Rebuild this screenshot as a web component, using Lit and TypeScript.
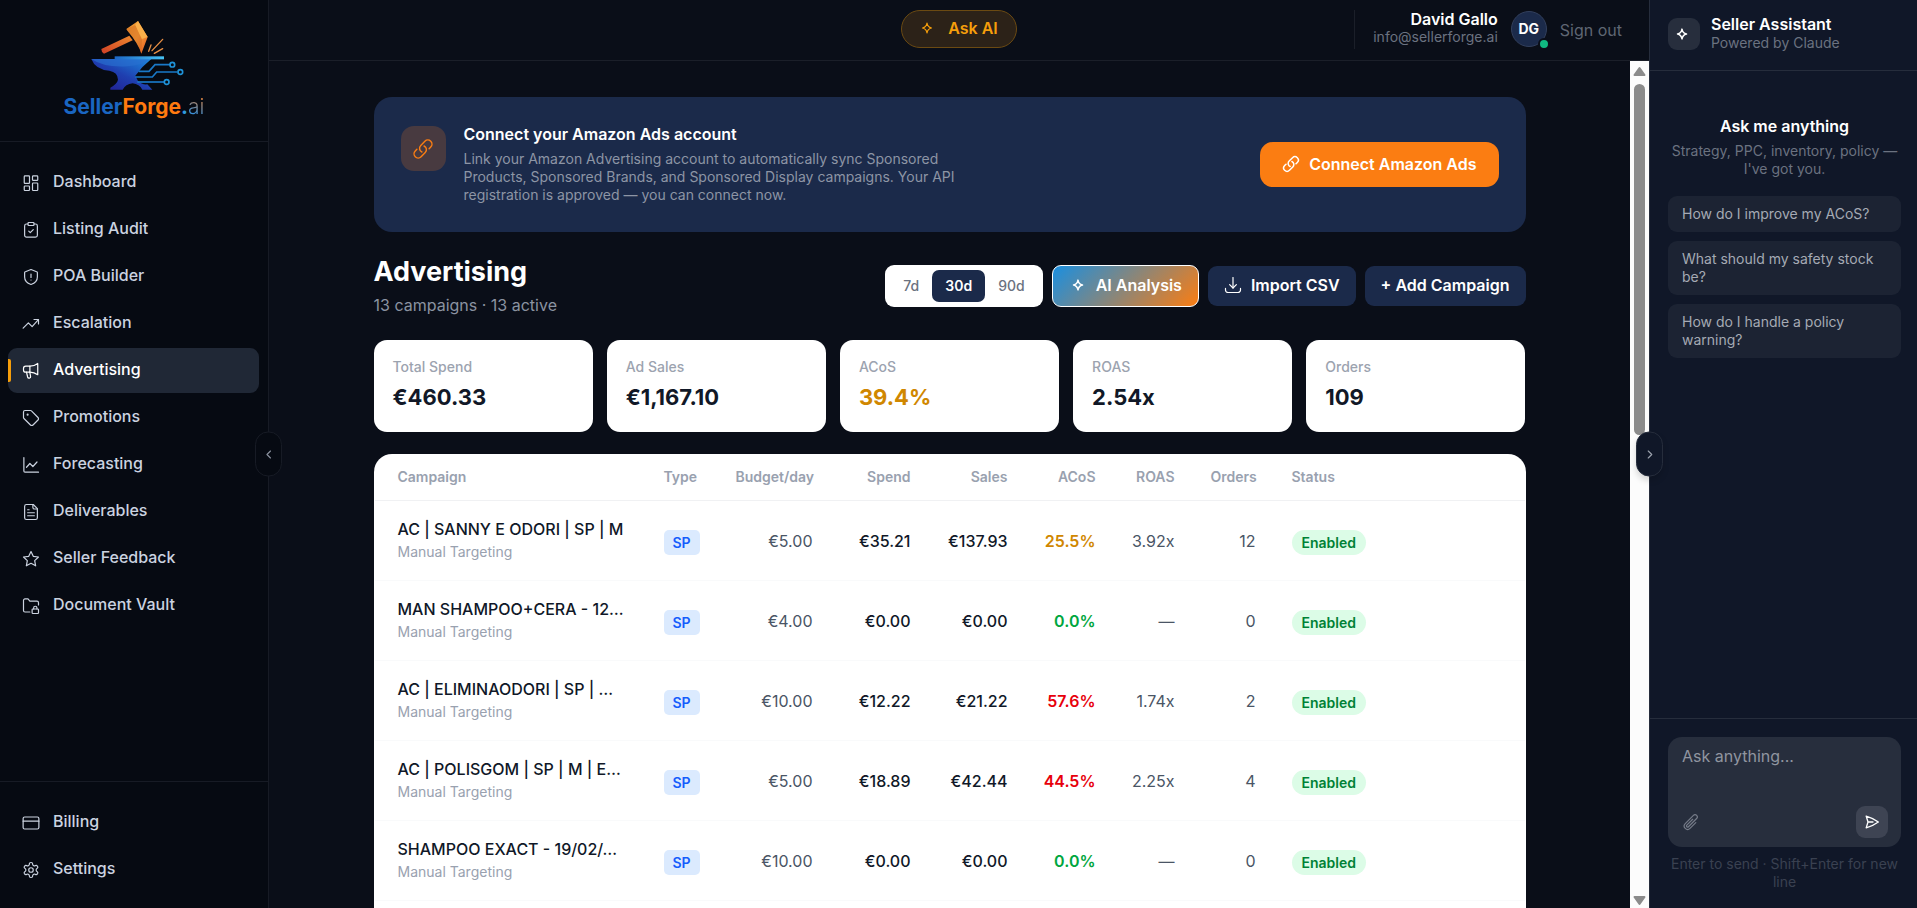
import { LitElement, html, css, svg } from "lit";
import { customElement, property, state } from "lit/decorators.js";
import { classMap } from "lit/directives/class-map.js";

const ICONS: Record<string, unknown> = {
  dashboard: svg`<rect x="3" y="2.500" width="7" height="10" rx="1"/><rect x="14" y="2.500" width="7" height="6" rx="1"/><rect x="14" y="12" width="7" height="10" rx="1"/><rect x="3" y="16" width="7" height="6" rx="1"/>`,
  clipboard: svg`<rect x="8" y="2" width="8" height="4" rx="1"/><path d="M16 4h2a2.500 2.500 0 0 1 2.500 2.500V19a2.500 2.500 0 0 1-2.500 2.500H6A2.500 2.500 0 0 1 3.500 19V6.500A2.500 2.500 0 0 1 6 4h2"/><path d="m9 13.500 2 2 4-4"/>`,
  shield: svg`<path d="M12 2 4.500 5a1 1 0 0 0-1 1v6c0 5 4 8.500 8.500 10 4.500-1.500 8.500-5 8.500-10V6a1 1 0 0 0-1-1L12 2z"/><path d="M12 8v4.500"/><path d="M12 16h.01"/>`,
  trend: svg`<path d="m1.500 17.500 7-7 5 5 8-9"/><path d="M16 6h6v6"/>`,
  megaphone: svg`<path d="M10.500 5.500H5a3 3 0 0 0-3 3v2a3 3 0 0 0 3 3h5.500z"/><path d="M10.500 5.500c4 0 7.500-1.200 10.500-3.500v15c-3-2.300-6.500-3.500-10.500-3.500"/><path d="M6 13.500l1.500 6.500a2 2 0 0 0 3.900-1l-1-5.500"/>`,
  tag: svg`<path d="M12.600 2.600A2 2 0 0 0 11.200 2H4a2 2 0 0 0-2 2v7.200a2 2 0 0 0 .6 1.400l8.700 8.700a2.400 2.400 0 0 0 3.400 0l6.600-6.600a2.400 2.400 0 0 0 0-3.400z"/><circle cx="7.500" cy="7.500" r=".6"/>`,
  chart: svg`<path d="M2.500 2v18a1.500 1.500 0 0 0 1.500 1.500h18"/><path d="m6 15 4.500-5 4 4L20 8"/>`,
  file: svg`<path d="M15 2H6a2.500 2.500 0 0 0-2.500 2.500v15A2.500 2.500 0 0 0 6 22h12a2.500 2.500 0 0 0 2.500-2.500V7.500z"/><path d="M14.500 2v4a2 2 0 0 0 2 2h4"/><path d="M7.500 9h2"/><path d="M7.500 13h9"/><path d="M7.500 17h9"/>`,
  star: svg`<path d="m12 2 3 6.400 7 .9-5.100 4.800 1.300 7-6.200-3.400-6.200 3.400 1.300-7L2 9.300l7-.9z"/>`,
  folder: svg`<path d="M10.500 20H4a2 2 0 0 1-2-2V4.500a2 2 0 0 1 2-2h4l2.500 3H20a2 2 0 0 1 2 2v3"/><rect x="13.500" y="16" width="8.500" height="6" rx="1"/><path d="M15.500 16v-1.500a2.200 2.200 0 0 1 4.400 0V16"/>`,
  card: svg`<rect x="1.500" y="4" width="21" height="16" rx="2"/><path d="M1.500 9.500h21"/>`,
  gear: svg`<path d="M12.200 2h-.4a2 2 0 0 0-2 2v.2a2 2 0 0 1-1 1.700l-.5.300a2 2 0 0 1-2 0l-.1-.1a2 2 0 0 0-2.700.7l-.3.400a2 2 0 0 0 .8 2.700l.1.100a2 2 0 0 1 1 1.700v.5a2 2 0 0 1-1 1.800l-.1.100a2 2 0 0 0-.8 2.700l.3.400a2 2 0 0 0 2.700.7l.1-.1a2 2 0 0 1 2 0l.5.300a2 2 0 0 1 1 1.700v.2a2 2 0 0 0 2 2h.4a2 2 0 0 0 2-2v-.2a2 2 0 0 1 1-1.700l.5-.3a2 2 0 0 1 2 0l.1.100a2 2 0 0 0 2.700-.7l.3-.4a2 2 0 0 0-.8-2.700l-.1-.1a2 2 0 0 1-1-1.800v-.5a2 2 0 0 1 1-1.700l.1-.1a2 2 0 0 0 .8-2.700l-.3-.4a2 2 0 0 0-2.700-.7l-.1.100a2 2 0 0 1-2 0l-.5-.3a2 2 0 0 1-1-1.700V4a2 2 0 0 0-2-2z"/><circle cx="12" cy="12" r="3"/>`,
  sparkle: svg`<path d="M12 5.500c.7 4 2.400 5.800 6 6.500-3.600.7-5.300 2.500-6 6.500-.7-4-2.400-5.800-6-6.500 3.600-.7 5.300-2.500 6-6.500z"/>`,
  link: svg`<path d="M13.190 8.688a4.500 4.500 0 0 1 1.242 7.244l-4.500 4.500a4.500 4.500 0 0 1-6.364-6.364l1.757-1.757m13.350-.622 1.757-1.757a4.500 4.500 0 0 0-6.364-6.364l-4.500 4.500a4.500 4.500 0 0 0 1.242 7.244"/>`,
  download: svg`<path d="M12 2v14"/><path d="m7.500 11.500 4.500 4.500 4.500-4.500"/><path d="M2 16.500v2A3.500 3.500 0 0 0 5.500 22h13a3.500 3.500 0 0 0 3.500-3.500v-2"/>`,
  left: svg`<path d="m14.500 6-6 6 6 6"/>`,
  right: svg`<path d="m9 6 6 6-6 6"/>`,
  clip: svg`<path d="m18.375 12.739-7.693 7.693a4.500 4.500 0 0 1-6.364-6.364l10.940-10.940A3 3 0 1 1 19.500 7.372L8.552 18.320m5.698-9.941-7.810 7.810a1.500 1.500 0 0 0 2.112 2.130"/>`,
  send: svg`<path d="M6 12 3.269 3.125A59.769 59.769 0 0 1 21.485 12 59.768 59.768 0 0 1 3.270 20.875L5.999 12Zm0 0h7.500"/>`,
};

@customElement("sf-icon")
class SfIcon extends LitElement {
  @property() name = "";
  static styles = css`
    :host { display: inline-flex; flex: none; width: 18px; height: 18px; }
    svg { width: 100%; height: 100%; fill: none; stroke: currentColor; stroke-width: var(--stroke, 1.6); stroke-linecap: round; stroke-linejoin: round; }
  `;
  render() {
    return html`<svg viewBox="0 0 24 24" aria-hidden="true">${ICONS[this.name]}</svg>`;
  }
}

@customElement("sf-logo")
class SfLogo extends LitElement {
  static styles = css`
    :host { display: flex; flex-direction: column; align-items: center; }
    svg { width: 96px; height: 72px; }
    .word { margin-top: 3px; font: 700 21px/26px "Inter", sans-serif; color: #1a66c2; }
    .forge { color: #ff7a0f; }
    .dot { color: #2f9be0; }
    .ai { font-weight: 300; background: linear-gradient(20deg, #3a8fd6 25%, #d97f3c 85%); -webkit-background-clip: text; background-clip: text; color: transparent; }
  `;
  render() {
    return html`
      <svg viewBox="256 54 288 216" overflow="visible" aria-hidden="true">
        <defs>
          <linearGradient id="hd" x1="0" y1="0" x2="1" y2="1"><stop offset="0" stop-color="#e8902c"/><stop offset="0.5" stop-color="#f7a03a"/><stop offset="1" stop-color="#e2551f"/></linearGradient>
          <linearGradient id="hn" x1="0" y1="1" x2="1" y2="0"><stop offset="0" stop-color="#cf3f26"/><stop offset="1" stop-color="#ee8a2e"/></linearGradient>
          <linearGradient id="bd" x1="0" y1="1" x2="1" y2="0"><stop offset="0" stop-color="#22188a"/><stop offset="0.5" stop-color="#1f3fb0"/><stop offset="1" stop-color="#1c8be0"/></linearGradient>
          <linearGradient id="pl" x1="0" y1="0" x2="1" y2="0"><stop offset="0" stop-color="#1c66c4"/><stop offset="1" stop-color="#46c3f5"/></linearGradient>
        </defs>
        <path d="M302 144 386 104 396 118 310 158Q302 154 302 144Z" fill="url(#hn)"/>
        <path d="M378 83 412 60 441 108 422 158Q414 128 378 86Z" fill="url(#hd)"/>
        <path d="M378 83 404 72 424 116 422 158Q414 128 378 86Z" fill="#c9601f" opacity=".4"/>
        <path d="M412 60 441 108 424 114 404 72Z" fill="#fbb04a"/>
        <g stroke="#e89045" stroke-width="4" stroke-linecap="round"><path d="M444 151 451 132"/><path d="M454 149 486 115"/><path d="M461 157 486 143"/></g>
        <path d="M272 174H452Q424 196 404 224L412 240Q424 252 440 250L455 266H425Q416 249 396 247 374 250 366 266H329V260Q350 248 352 236 352 214 326 209 284 206 272 174Z" fill="url(#bd)"/>
        <path d="M272 174H448Q424 194 380 196 310 200 272 174Z" fill="#2a6fd0" opacity=".65"/>
        <rect x="342" y="166" width="148" height="9" fill="url(#pl)"/>
        <g fill="none" stroke="#1979c8" stroke-width="5"><path d="M414 211H445L463 191H508"/><path d="M404 228H455L468 213H530"/><path d="M410 243H490"/></g>
        <g fill="#060a12" stroke="#1f93d8" stroke-width="5"><circle cx="515" cy="191" r="7"/><circle cx="539" cy="213" r="7"/><circle cx="498" cy="243" r="7"/></g>
      </svg>
      <div class="word">Seller<span class="forge">Forge</span><span class="dot">.</span><span class="ai">ai</span></div>
    `;
  }
}

const NAV = [
  ["dashboard", "Dashboard"], ["clipboard", "Listing Audit"], ["shield", "POA Builder"],
  ["trend", "Escalation"], ["megaphone", "Advertising"], ["tag", "Promotions"],
  ["chart", "Forecasting"], ["file", "Deliverables"], ["star", "Seller Feedback"], ["folder", "Document Vault"],
];
const FOOT = [["card", "Billing"], ["gear", "Settings"]];

@customElement("sf-sidebar")
class SfSidebar extends LitElement {
  static styles = css`
    :host { position: relative; z-index: 3; display: flex; flex-direction: column; flex: none; width: 268px; background: #060a12; border-right: 1px solid #171b25; }
    .brand { padding: 19px 0 21px; border-bottom: 1px solid #171b25; }
    nav { display: flex; flex-direction: column; gap: 2px; padding: 18px 9px 16px 8px; }
    .main { flex: 1; }
    .foot { border-top: 1px solid #171b25; }
    a { position: relative; display: flex; align-items: center; gap: 13px; height: 45px; padding: 0 14px; border-radius: 9px; color: #cbd3e0; font-size: 16px; font-weight: 500; text-decoration: none; }
    a span { margin-bottom: 3px; }
    a.on { background: #202836; color: #fff; }
    a.on::before { content: ""; position: absolute; left: 0; top: 11px; width: 3px; height: 23px; border-radius: 0 2px 2px 0; background: #f59e0b; }
    .fold { position: absolute; right: -14px; top: 50%; transform: translateY(-50%); display: grid; place-items: center; width: 27px; height: 45px; padding: 0; border: 1px solid #171b25; border-radius: 13px; background: #060a12; color: #8a919e; --stroke: 2; }
    .fold sf-icon { width: 14px; height: 14px; }
  `;
  private item([icon, label]: string[]) {
    const on = label === "Advertising";
    return html`<a href="#" class=${classMap({ on })}><sf-icon name=${icon}></sf-icon><span>${label}</span></a>`;
  }
  render() {
    return html`
      <div class="brand"><sf-logo></sf-logo></div>
      <nav class="main">${NAV.map((n) => this.item(n))}</nav>
      <nav class="foot">${FOOT.map((n) => this.item(n))}</nav>
      <button class="fold" aria-label="Collapse menu"><sf-icon name="left"></sf-icon></button>
    `;
  }
}

@customElement("sf-assistant")
class SfAssistant extends LitElement {
  static styles = css`
    :host { position: relative; z-index: 3; display: flex; flex-direction: column; flex: none; width: 267px; background: #101728; border-left: 1px solid #262d3c; }
    header { display: flex; align-items: center; gap: 11px; height: 71px; box-sizing: border-box; padding: 0 16px 2px 18px; border-bottom: 1px solid #262d3c; }
    .title { padding-bottom: 3px; }
    .mark { display: grid; place-items: center; width: 32px; height: 32px; border-radius: 9px; background: #272e3d; color: #fff; --stroke: 2; }
    .mark sf-icon { margin-right: 4px; }
    h2 { margin: 0; font-size: 16px; line-height: 20px; font-weight: 600; color: #fff; }
    p { margin: 0; font-size: 14px; line-height: 18px; color: #6b7280; }
    .body { flex: 1; display: flex; flex-direction: column; gap: 9px; padding: 44px 16px 18px 18px; }
    .intro { text-align: center; margin-bottom: 9px; }
    .intro h2 { line-height: 22px; margin-bottom: 5px; }
    .chip { display: block; width: 100%; padding: 9px 14px; border: 0; border-radius: 9px; background: #1c2333; color: #a5aab4; font: 400 14px/18px "Inter", sans-serif; text-align: left; }
    footer { display: flex; flex-direction: column; padding: 18px 16px 17px 18px; border-top: 1px solid #262d3c; text-align: center; }
    .box { display: flex; flex-direction: column; box-sizing: border-box; height: 110px; margin-bottom: 8px; padding: 8px 13px 9px 14px; border-radius: 14px; background: #272e3d; }
    textarea { flex: 1; min-height: 0; border: 0; padding: 0; background: none; outline: none; resize: none; color: #fff; font: 400 16px/22px "Inter", sans-serif; }
    textarea::placeholder { color: #9095a0; opacity: 1; }
    .tools { display: flex; align-items: center; justify-content: space-between; }
    .tools button { display: grid; place-items: center; height: 32px; padding: 0; border: 0; background: none; color: #767c89; }
    .tools .send { width: 32px; border-radius: 9px; background: #3e4453; color: #fff; --stroke: 2; }
    .tools sf-icon { width: 18px; height: 18px; }
    .tools .send sf-icon { width: 16px; height: 16px; }
    .hint { color: #3a4151; }
    .fold { position: absolute; left: -14px; top: 50%; transform: translateY(-50%); display: grid; place-items: center; width: 27px; height: 45px; padding: 0; border: 1px solid #262d3c; border-radius: 13px; background: #101728; color: #9aa0ac; --stroke: 2; box-shadow: 0 4px 6px rgba(0, 0, 0, 0.15); }
    .fold sf-icon { width: 14px; height: 14px; }
  `;
  render() {
    return html`
      <button class="fold" aria-label="Collapse assistant"><sf-icon name="right"></sf-icon></button>
      <header>
        <div class="mark"><sf-icon name="sparkle"></sf-icon></div>
        <div class="title"><h2>Seller Assistant</h2><p>Powered by Claude</p></div>
      </header>
      <div class="body">
        <div class="intro"><h2>Ask me anything</h2><p>Strategy, PPC, inventory, policy — I've got you.</p></div>
        ${["How do I improve my ACoS?", "What should my safety stock be?", "How do I handle a policy warning?"].map(
          (q) => html`<button class="chip">${q}</button>`)}
      </div>
      <footer>
        <div class="box">
          <textarea aria-label="Message" placeholder="Ask anything..."></textarea>
          <div class="tools">
            <button aria-label="Attach file"><sf-icon name="clip"></sf-icon></button>
            <button class="send" aria-label="Send"><sf-icon name="send"></sf-icon></button>
          </div>
        </div>
        <p class="hint">Enter to send · Shift+Enter for new line</p>
      </footer>
    `;
  }
}

const STATS = [["Total Spend", "€460.33"], ["Ad Sales", "€1,167.10"], ["ACoS", "39.4%"], ["ROAS", "2.54x"], ["Orders", "109"]];
const ROWS = [
  ["AC | SANNY E ODORI | SP | M", "€5.00", "€35.21", "€137.93", "25.5%", "3.92x", "12", "warn"],
  ["MAN SHAMPOO+CERA - 12…", "€4.00", "€0.00", "€0.00", "0.0%", "—", "0", "good"],
  ["AC | ELIMINAODORI | SP | …", "€10.00", "€12.22", "€21.22", "57.6%", "1.74x", "2", "bad"],
  ["AC | POLISGOM | SP | M | E…", "€5.00", "€18.89", "€42.44", "44.5%", "2.25x", "4", "bad"],
  ["SHAMPOO EXACT - 19/02/…", "€10.00", "€0.00", "€0.00", "0.0%", "—", "0", "good"],
];

@customElement("app-root")
class AppRoot extends LitElement {
  @state() private range = "30d";
  static styles = css`
    :host { display: flex; height: 100vh; overflow: hidden; background: #0a0e18; font-family: "Inter", sans-serif; font-size: 16px; line-height: 22px; color: #fff; }
    button { font-family: inherit; cursor: pointer; }
    .center { flex: 1; min-width: 0; display: flex; flex-direction: column; }
    .top { display: grid; grid-template-columns: 1fr auto 1fr; align-items: center; flex: none; height: 61px; box-sizing: border-box; padding: 0 27px 2px; border-bottom: 1px solid #1b1f29; }
    .ask { grid-column: 2; display: flex; align-items: center; gap: 12px; height: 38px; padding: 0 18px 2px 16px; border: 1px solid #6b4a12; border-radius: 19px; background: #2c2218; color: #f59e0b; font-size: 16px; font-weight: 600; }
    .user { display: flex; align-items: center; justify-content: flex-end; gap: 13px; }
    .who { border-left: 1px solid #1b1f29; padding: 0 0 3px 18px; text-align: right; }
    .who, .name, .mail { line-height: 18px; }
    .name { font-weight: 600; }
    .mail { font-size: 14px; color: #6b7280; }
    .ava { position: relative; display: grid; place-items: center; width: 36px; height: 36px; box-sizing: border-box; border: 1px solid #323f5c; border-radius: 50%; background: #1b2a4a; font-size: 14px; font-weight: 700; }
    .ava::after { content: ""; position: absolute; right: -4px; bottom: -4px; width: 8px; height: 8px; border: 2px solid #0a0e18; border-radius: 50%; background: #10b981; }
    .out { padding: 0; border: 0; background: none; color: #5f6673; font-size: 16px; line-height: 22px; margin-top: 2px; }
    .view { flex: 1; min-height: 0; display: flex; }
    .scroll { flex: 1; min-width: 0; overflow-y: auto; scrollbar-width: none; padding: 36px 36px 0; }
    .page { display: flex; flex-direction: column; gap: 22px; max-width: 1152px; margin: 0 auto; }
    .rail { display: flex; flex-direction: column; align-items: center; flex: none; width: 19px; box-sizing: border-box; padding: 5px 0 2px; background: #fcfcfc; }
    .rail svg { width: 13px; height: 11px; fill: #8b8b8b; stroke: #8b8b8b; stroke-width: 2; stroke-linejoin: round; }
    .thumb { flex: 351; width: 11px; margin-top: 7px; border-radius: 6px; background: #8b8b8b; }
    .rest { flex: 459; }

    .banner { display: flex; align-items: center; justify-content: space-between; gap: 24px; padding: 27px; border-radius: 18px; background: #1b2a4a; }
    .lead { display: flex; gap: 18px; }
    .badge { display: grid; place-items: center; flex: none; width: 45px; height: 45px; margin-top: 2px; border-radius: 13px; background: #483a40; color: #f97d13; }
    .badge sf-icon { width: 22px; height: 22px; }
    .lead h2 { margin: 0 0 5px; font-size: 16px; line-height: 21px; font-weight: 600; }
    .lead p { margin: 0 0 1px; max-width: 504px; font-size: 14px; line-height: 18px; color: #8d95a5; }
    .btn { display: flex; align-items: center; gap: 9px; height: 40px; padding: 0 16px 1px; border: 0; border-radius: 9px; background: #1b2a4a; color: #fff; font-size: 16px; font-weight: 600; white-space: nowrap; }
    .cta { height: 45px; padding: 0 22px 2px; border-radius: 13px; background: #fb7d12; --stroke: 2; }
    .ai { height: 42px; border: 1px solid #fff; background: linear-gradient(135deg, #1a8fe0, #fb7d12); --stroke: 2; }

    .head { display: flex; align-items: center; justify-content: space-between; gap: 24px; margin-bottom: 1px; }
    h1 { margin: 0 0 4px; font-size: 27px; line-height: 36px; font-weight: 700; }
    .head p { margin: 0; line-height: 23px; color: #8b93a1; }
    .actions { display: flex; align-items: center; gap: 9px; }
    .seg { display: flex; box-sizing: border-box; height: 42px; padding: 5px; border-radius: 9px; background: #fff; }
    .seg button { padding: 0 13px 1px; border: 0; border-radius: 7px; background: none; color: #6b7280; font-size: 14px; font-weight: 500; }
    .seg button.on { background: #1b2a4a; color: #fff; font-weight: 600; }

    .stats { display: grid; grid-template-columns: repeat(5, 1fr); gap: 14px; }
    .stat { box-sizing: border-box; height: 92px; padding: 18px 19px; border-radius: 13px; background: #fff; }
    .label { font-size: 14px; line-height: 18px; font-weight: 500; color: #9ca3af; }
    .value { margin-top: 6px; font-size: 22px; line-height: 31px; font-weight: 700; color: #111827; }
    .stat .warn, td.warn { color: #d08700; }
    td.good { color: #00a63e; }
    td.bad { color: #e7000b; }

    .card { overflow: hidden; border-radius: 18px; background: #fff; padding: 0 1px 40px; }
    table { width: 100%; table-layout: fixed; border-collapse: collapse; color: #4a5565; }
    th { height: 46px; box-sizing: border-box; padding: 0 18px; border-bottom: 1px solid #f0f1f3; font-size: 14px; line-height: 18px; font-weight: 600; color: #99a1af; text-align: left; }
    td { height: 80px; box-sizing: border-box; padding: 2px 18px 0; border-bottom: 1px solid #f9fafb; }
    th:first-child, td:first-child { padding-left: 23px; }
    .num { text-align: right; }
    td.strong { font-weight: 500; color: #101828; }
    td.acos { font-weight: 600; }
    .cname { font-weight: 500; color: #101828; white-space: nowrap; }
    .cmode { margin: 3px 0; font-size: 14px; line-height: 18px; color: #99a1af; }
    .tag, .pill { display: inline-block; height: 25px; line-height: 25px; margin-top: 3px; font-size: 14px; font-weight: 600; vertical-align: middle; }
    .tag { padding: 0 9px; border-radius: 5px; background: #dbeafe; color: #155dfc; }
    .pill { padding: 0 10px; border-radius: 13px; background: #dcfce7; color: #008236; }
    .c1 { width: 271px; } .c2 { width: 72px; } .c3 { width: 113px; } .c4 { width: 98px; } .c5 { width: 97px; }
    .c6 { width: 88px; } .c7 { width: 79px; } .c8 { width: 81px; }
  `;
  render() {
    return html`
      <sf-sidebar></sf-sidebar>
      <div class="center">
        <header class="top">
          <button class="ask"><sf-icon name="sparkle"></sf-icon>Ask AI</button>
          <div class="user">
            <div class="who"><div class="name">David Gallo</div><div class="mail">info@sellerforge.ai</div></div>
            <div class="ava">DG</div>
            <button class="out">Sign out</button>
          </div>
        </header>
        <div class="view">
          <main class="scroll">
            <div class="page">
              <section class="banner">
                <div class="lead">
                  <div class="badge"><sf-icon name="link"></sf-icon></div>
                  <div>
                    <h2>Connect your Amazon Ads account</h2>
                    <p>Link your Amazon Advertising account to automatically sync Sponsored Products, Sponsored Brands, and Sponsored Display campaigns. Your API registration is approved — you can connect now.</p>
                  </div>
                </div>
                <button class="btn cta"><sf-icon name="link"></sf-icon>Connect Amazon Ads</button>
              </section>
              <section class="head">
                <div><h1>Advertising</h1><p>13 campaigns · 13 active</p></div>
                <div class="actions">
                  <div class="seg">
                    ${["7d", "30d", "90d"].map((r) => html`<button class=${classMap({ on: r === this.range })} @click=${() => (this.range = r)}>${r}</button>`)}
                  </div>
                  <button class="btn ai"><sf-icon name="sparkle"></sf-icon>AI Analysis</button>
                  <button class="btn"><sf-icon name="download"></sf-icon>Import CSV</button>
                  <button class="btn">+ Add Campaign</button>
                </div>
              </section>
              <section class="stats">
                ${STATS.map(([l, v]) => html`<div class="stat"><div class="label">${l}</div><div class=${classMap({ value: true, warn: l === "ACoS" })}>${v}</div></div>`)}
              </section>
              <section class="card">
                <table>
                  <colgroup>${[1, 2, 3, 4, 5, 6, 7, 8].map((n) => html`<col class="c${n}" />`)}<col /></colgroup>
                  <thead>
                    <tr><th>Campaign</th><th>Type</th><th class="num">Budget/day</th><th class="num">Spend</th><th class="num">Sales</th><th class="num">ACoS</th><th class="num">ROAS</th><th class="num">Orders</th><th>Status</th></tr>
                  </thead>
                  <tbody>
                    ${ROWS.map(([name, budget, spend, sales, acos, roas, orders, tone]) => html`
                      <tr>
                        <td><div class="cname">${name}</div><div class="cmode">Manual Targeting</div></td>
                        <td><span class="tag">SP</span></td>
                        <td class="num">${budget}</td>
                        <td class="num strong">${spend}</td>
                        <td class="num strong">${sales}</td>
                        <td class="num acos ${tone}">${acos}</td>
                        <td class="num">${roas}</td>
                        <td class="num">${orders}</td>
                        <td><span class="pill">Enabled</span></td>
                      </tr>`)}
                  </tbody>
                </table>
              </section>
            </div>
          </main>
          <div class="rail" aria-hidden="true">
            <svg viewBox="0 0 13 11"><path d="M6.500 2 11.500 9H1.500Z"/></svg>
            <div class="thumb"></div>
            <div class="rest"></div>
            <svg viewBox="0 0 13 11"><path d="M6.500 9 11.500 2H1.500Z"/></svg>
          </div>
        </div>
      </div>
      <sf-assistant></sf-assistant>
    `;
  }
}
